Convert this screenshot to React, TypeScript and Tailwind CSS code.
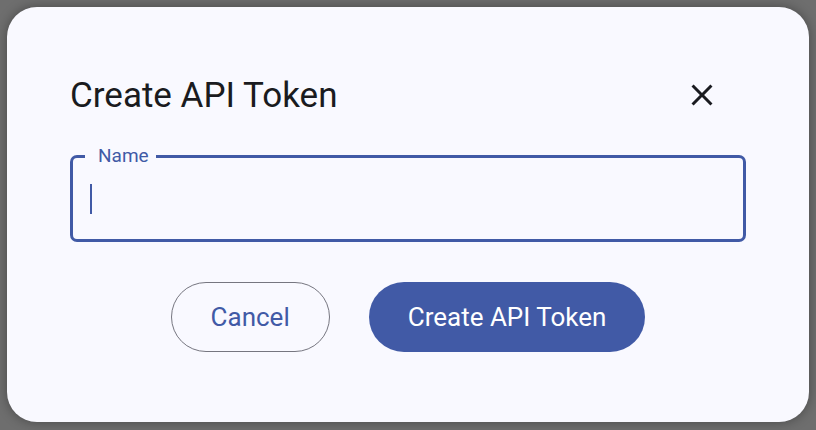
import React from "react";

export default function App() {
  return (
    <div
      className="w-[816px] h-[430px] bg-[#6e6e6e] p-[7px] overflow-hidden"
      style={{ fontFamily: "Roboto, 'Liberation Sans', sans-serif" }}
    >
      <div className="w-[802px] h-[415px] rounded-[30px] bg-[#f9f9ff] shadow-[0_0_12px_rgba(0,0,0,0.35)] flex flex-col px-[63px] pt-[69px]">
        <div className="flex items-center justify-between h-[40px]">
          <h1 className="text-[35px] leading-[40px] text-[#1a1b20] font-normal">Create API Token</h1>
          <button className="mr-[26px] mt-[-2px] w-[36px] h-[36px] flex items-center justify-center text-[#1a1b20]">
            <svg width="36" height="36" viewBox="0 0 24 24" fill="currentColor">
              <path d="M19 6.41L17.59 5 12 10.59 6.41 5 5 6.41 10.59 12 5 17.59 6.41 19 12 13.41 17.59 19 19 17.59 13.41 12z" />
            </svg>
          </button>
        </div>
        <div className="mt-[39px] relative h-[87px] border-[3px] border-[#415aa6] rounded-[7px] flex items-center pl-[17px]">
          <span className="absolute left-[12px] top-[-12px] bg-[#f9f9ff] pl-[13px] pr-[7px] text-[19px] leading-[20px] text-[#415aa6]">
            Name
          </span>
          <div className="w-[2px] h-[30px] bg-[#415aa6]" />
        </div>
        <div className="mt-[40px] flex justify-center gap-[39px]">
          <button className="h-[70px] px-[39px] rounded-full border border-[#767680] text-[26px] text-[#415aa6] bg-transparent">
            Cancel
          </button>
          <button className="h-[70px] px-[39px] rounded-full bg-[#415aa6] text-[26px] text-white">
            Create API Token
          </button>
        </div>
      </div>
    </div>
  );
}
